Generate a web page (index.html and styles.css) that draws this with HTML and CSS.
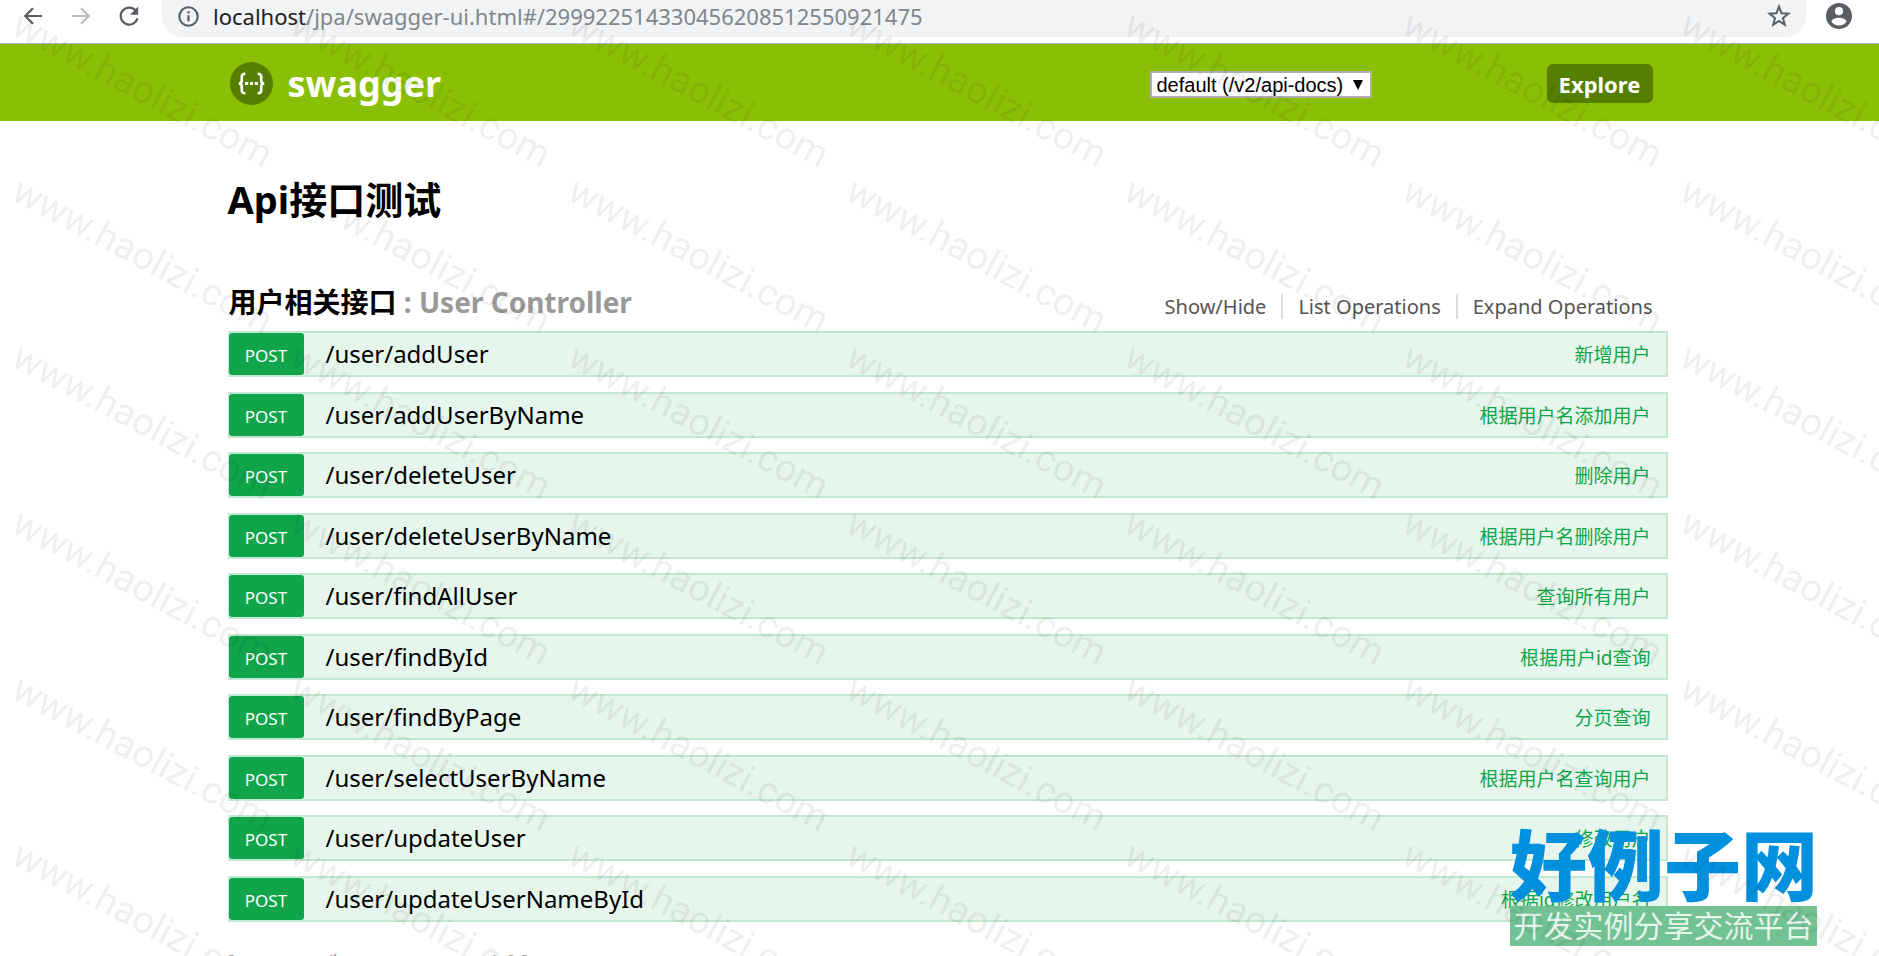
FILE: index.html
```
<!DOCTYPE html>
<html lang="zh-CN">
<head>
<meta charset="utf-8">
<title>Swagger UI</title>
<link rel="stylesheet" href="styles.css">
</head>
<body>
<div class="browser-bar">
  <button class="nav-btn" aria-label="Back"><svg viewBox="0 0 24 24"><path d="M22 12H4M12 3.500l-8.500 8.500 8.500 8.500" fill="none" stroke="#5a5e63" stroke-width="2.400"/></svg></button>
  <button class="nav-btn" aria-label="Forward"><svg viewBox="0 0 24 24"><path d="M2 12h18M12 3.500l8.500 8.500-8.500 8.500" fill="none" stroke="#bcbdbf" stroke-width="2.400"/></svg></button>
  <button class="nav-btn" aria-label="Reload"><svg viewBox="0 0 24 24"><path d="M20 7A9.300 9.300 0 1 0 21.200 14.500" fill="none" stroke="#5a5e63" stroke-width="2.400"/><path d="M22 1.500v9h-9z" fill="#5a5e63"/></svg></button>
  <div class="address">
    <svg class="info" viewBox="0 0 24 24"><circle cx="12" cy="12" r="10.500" fill="none" stroke="#5a5e63" stroke-width="2.400"/><path d="M12 10.500v7M12 6v2.600" stroke="#5a5e63" stroke-width="2.600"/></svg>
    <span class="url"><b>localhost</b>/jpa/swagger-ui.html#/299922514330456208512550921475</span>
    <button class="star" aria-label="Bookmark"><svg viewBox="0 0 24 24"><path d="M12 2.500l2.500 6.700 6.900.400-5.400 4.400 1.800 6.800-5.800-3.900-5.800 3.900 1.800-6.800-5.400-4.400 6.900-.400z" fill="none" stroke="#5a5e63" stroke-width="2"/></svg></button>
  </div>
  <button class="profile" aria-label="Profile"><svg viewBox="0 0 24 24"><circle cx="12" cy="12" r="12" fill="#5a5e63"/><circle cx="12" cy="7.500" r="3.700" fill="#fff"/><path d="M12 13.500c3.500 0 7 1.700 7 3.600-1.500 2.300-4 3.700-7 3.700s-5.500-1.400-7-3.700c0-1.900 3.500-3.600 7-3.600z" fill="#fff"/></svg></button>
</div>
<header class="header">
  <div class="wrap header-row">
    <a class="logo" href="#"><svg viewBox="0 0 42 42"><circle cx="21" cy="21" r="21" fill="#547f00"/><path d="M15 11.500c-3 0-3.500 1-3.500 3.500v3c0 2-1 3-3 3 2 0 3 1 3 3v3c0 2.500.5 3.500 3.500 3.500M27 11.500c3 0 3.500 1 3.500 3.500v3c0 2 1 3 3 3-2 0-3 1-3 3v3c0 2.500-.5 3.500-3.500 3.500" fill="none" stroke="#fff" stroke-width="2.600"/><path d="M14.800 21h3M19.500 21h3M24.200 21h3" stroke="#fff" stroke-width="2.800"/></svg>swagger</a>
    <form class="picker">
      <span class="select-box"><select aria-label="API definition"><option>default (/v2/api-docs)</option></select></span>
      <button type="button" class="explore">Explore</button>
    </form>
  </div>
</header>
<main class="wrap">
  <h1>Api接口测试</h1>
  <section>
    <div class="resource-head">
      <h2>用户相关接口 <span>: User Controller</span></h2>
      <nav><a href="#">Show/Hide</a><a href="#">List Operations</a><a href="#">Expand Operations</a></nav>
    </div>
    <ul class="ops">
      <li><a class="method" href="#">POST</a><a class="path" href="#">/user/addUser</a><a class="desc" href="#">新增用户</a></li>
      <li><a class="method" href="#">POST</a><a class="path" href="#">/user/addUserByName</a><a class="desc" href="#">根据用户名添加用户</a></li>
      <li><a class="method" href="#">POST</a><a class="path" href="#">/user/deleteUser</a><a class="desc" href="#">删除用户</a></li>
      <li><a class="method" href="#">POST</a><a class="path" href="#">/user/deleteUserByName</a><a class="desc" href="#">根据用户名删除用户</a></li>
      <li><a class="method" href="#">POST</a><a class="path" href="#">/user/findAllUser</a><a class="desc" href="#">查询所有用户</a></li>
      <li><a class="method" href="#">POST</a><a class="path" href="#">/user/findById</a><a class="desc" href="#">根据用户id查询</a></li>
      <li><a class="method" href="#">POST</a><a class="path" href="#">/user/findByPage</a><a class="desc" href="#">分页查询</a></li>
      <li><a class="method" href="#">POST</a><a class="path" href="#">/user/selectUserByName</a><a class="desc" href="#">根据用户名查询用户</a></li>
      <li><a class="method" href="#">POST</a><a class="path" href="#">/user/updateUser</a><a class="desc" href="#">修改用户</a></li>
      <li><a class="method" href="#">POST</a><a class="path" href="#">/user/updateUserNameById</a><a class="desc" href="#">根据id修改用户名</a></li>
    </ul>
  </section>
  <footer>[ <span>base url</span>: /jpa , <span>api version</span>: 1.0 ]</footer>
</main>
<div class="brand"><strong>好例子网</strong><span>开发实例分享交流平台</span></div>
<div class="marks" aria-hidden="true"></div>
<script src="marks.js"></script>
</body>
</html>
```
FILE: styles.css
```
* { box-sizing: border-box; }
body {
  margin: 0;
  height: 100vh;
  overflow: hidden;
  position: relative;
  background: #fff;
  color: #000;
  font-family: "Noto Sans", "Noto Sans CJK SC", sans-serif;
}
a { color: inherit; text-decoration: none; }
button { border: 0; padding: 0; background: none; cursor: pointer; }
svg { display: block; }

.browser-bar {
  display: flex;
  align-items: flex-start;
  height: 44px;
  padding: 0 27px 0 22px;
  border-bottom: 1px solid #b6b4b6;
}
.nav-btn { width: 22px; margin: 5px 26px 0 0; }
.nav-btn svg { width: 22px; height: 22px; }
.address {
  flex: 1;
  display: flex;
  align-items: center;
  height: 37px;
  padding: 0 15px 5px 16px;
  margin-left: -4px;
  background: #f1f3f4;
  border-radius: 0 0 20px 20px;
}
.info { width: 21px; height: 21px; margin-right: 14px; }
.url { flex: 1; font-size: 22px; line-height: 32px; color: #80868b; }
.url b { font-weight: 400; color: #202124; }
.star svg { width: 24px; height: 24px; }
.profile { margin: 3px 0 0 20px; }
.profile svg { width: 26px; height: 26px; }

.wrap { width: 77%; max-width: 1440px; margin: 0 auto; position: relative; left: 8px; }
.header { background: #89bf04; }
.header-row { display: flex; justify-content: space-between; align-items: center; height: 77px; padding-top: 2px; }
.logo { display: flex; align-items: center; gap: 15px; padding-left: 2px; color: #fff; font-size: 36px; font-weight: 700; }
.logo svg { width: 43px; height: 43px; }
.picker { display: flex; align-items: center; gap: 175px; padding-right: 15px; }
.select-box { display: block; position: relative; padding-top: 2px; }
.select-box::after {
  content: "";
  position: absolute;
  right: 9px;
  top: 11px;
  border: 5px solid transparent;
  border-top: 10px solid #000;
  border-bottom: 0;
  pointer-events: none;
}
.picker select {
  display: block;
  appearance: none;
  width: 222px;
  height: 27px;
  padding: 0 5px;
  border: 2px solid #b0aeb4;
  border-radius: 0;
  background: #fff;
  color: #000;
  font: 20px "Liberation Sans", sans-serif;
}
.explore {
  width: 106px;
  height: 39px;
  border-radius: 6px;
  background: #547f00;
  color: #fff;
  font: 700 22px "Noto Sans", sans-serif;
}

h1 { margin: 48px 0 0; font-size: 38px; line-height: 60px; }
.resource-head { display: flex; justify-content: space-between; align-items: center; margin-top: 52px; height: 50px; }
h2 { margin: 0; padding: 0 0 9px 1px; font-size: 28px; line-height: 40px; }
h2 span { color: #999; }
nav { display: flex; }
nav a { padding: 0 15px; font-size: 20px; line-height: 25px; color: #555; border-left: 2px solid #ddd; }
nav a:first-child { border: 0; }
.ops { display: flex; flex-direction: column; justify-content: space-between; min-height: 591px; margin: 0; padding: 0; list-style: none; }
.ops li { display: flex; align-items: center; height: 46px; padding-right: 15px; background: #e7f6ec; border: 2px solid #c3e8d1; border-left-width: 1px; }
.method { width: 75px; padding-top: 4px; border-radius: 3px; background: #10a54a; color: #fff; font-size: 17px; line-height: 38px; text-align: center; }
.path { flex: 1; padding-left: 22px; font-size: 24px; line-height: 40px; }
.desc { padding-top: 2px; color: #10a54a; font-size: 19px; line-height: 40px; }
footer { padding-top: 28px; font-size: 20px; line-height: 24px; color: #999; }
footer span { font-variant: small-caps; }

.brand { position: absolute; right: 62px; bottom: 10px; width: 307px; text-align: center; }
.brand strong { display: block; font-size: 77px; line-height: 80px; font-weight: 900; color: #0090de; white-space: nowrap; }
.brand span { display: block; background: #72c293; color: #e6f5ec; font-size: 30px; line-height: 40px; }

.marks {
  position: absolute;
  inset: 0;
  overflow: hidden;
  pointer-events: none;
  display: grid;
  grid-template-columns: repeat(7, 278px);
  grid-auto-rows: 166px;
}
.marks span {
  padding-left: 9px;
  font: 38px/40px Roboto, sans-serif;
  color: rgba(0, 0, 0, .08);
  white-space: nowrap;
  transform: rotate(28deg);
  transform-origin: 9px 34px;
}
```
FILE: marks.js
```
const marks = document.querySelector('.marks');
for (let i = 0; i < 42; i++) {
  const mark = document.createElement('span');
  mark.textContent = 'www.haolizi.com';
  marks.append(mark);
}
```
